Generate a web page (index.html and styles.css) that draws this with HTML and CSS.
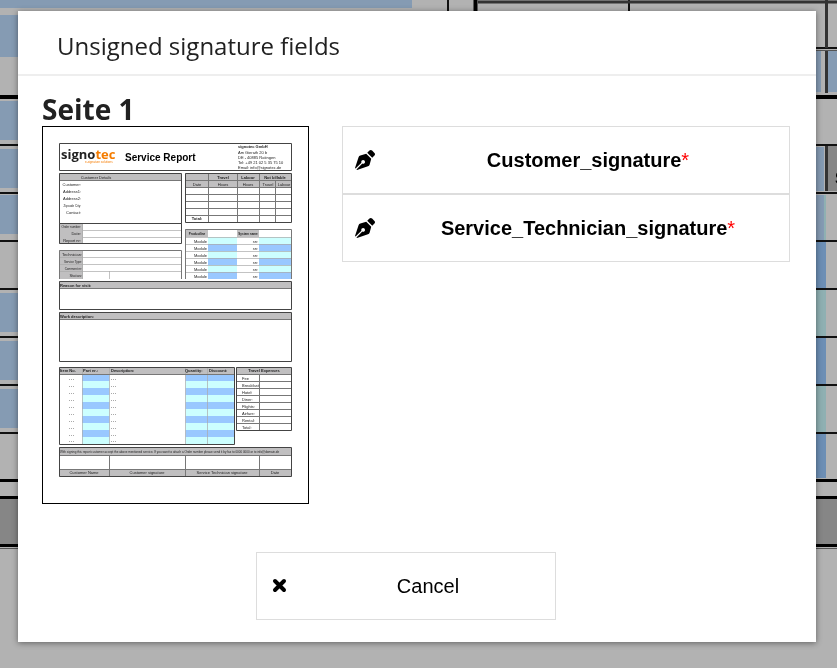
FILE: index.html
```html
<!DOCTYPE html>
<html lang="en">
<head>
    <meta charset="UTF-8">
    <meta name="viewport" content="width=device-width, initial-scale=1.0">
    <title>Unsigned signature fields</title>
    <link rel="stylesheet" href="styles.css">
</head>
<body>
    <!-- Document behind the dialog -->
    <svg class="document" viewBox="0 0 837 668" preserveAspectRatio="xMinYMin slice" aria-hidden="true">
        <path fill="#859bb3" d="M0 0H412V8H0zM0 15H200V57H0zM0 101H200V140H0zM0 149H200V188H0zM0 195H200V234H0zM0 293H200V332H0zM0 341H200V380H0zM0 389H200V428H0z"/>
        <path fill="#859bb3" d="M700 51H821V92H700zM828 51H837V92H828zM700 147H824V191H700zM700 195H824V240H700z"/>
        <path fill="#8fb0b2" d="M824 195H826V240H824zM700 290H826V336H700zM700 386H826V432H700z"/>
        <path fill="#6d8fb5" d="M700 242H826V288H700zM700 338H826V384H700zM700 434H826V478H700z"/>
        <path fill="#868686" d="M0 498H837V544H0zM828 146H837V191H828z"/>
        <path stroke="#000" stroke-width="4" d="M0 97H837M475.500 0V48"/>
        <path stroke="#111" stroke-width="2" d="M0 145H837M0 193H837M0 241H837M0 289H837M0 337H837M0 385H837M0 433H837M448 0V48M629 0V48M700 48H837"/>
        <path stroke="#000" stroke-width="3" d="M0 480.500H837M0 497.500H837M0 545.500H837"/>
        <path stroke="#333" stroke-width="3" d="M478 2H837M826.500 0V48M826.500 51V93M826.500 146V191"/>
        <path stroke="#555" d="M0 548.500H837M700 50.500H837"/>
        <text x="835" y="184" class="document-text">S</text>
    </svg>

    <div class="overlay">
        <div class="dialog" role="dialog" aria-modal="true" aria-labelledby="dialogTitle">
            <header>
                <h1 id="dialogTitle">Unsigned signature fields</h1>
            </header>
            <main>
                <h2>Seite 1</h2>
                <div class="page-row">
                    <svg class="thumbnail" viewBox="1 1 265 376" role="img" aria-label="Service Report">
                        <defs>
                            <pattern id="stripes" width="10" height="14" patternUnits="userSpaceOnUse" y="248">
                                <rect width="10" height="7" fill="#99c8ff"/>
                                <rect y="7" width="10" height="7" fill="#ccffff"/>
                            </pattern>
                        </defs>

                        <!-- Fills -->
                        <path fill="#c0bfc0" d="M17 47H139V54.500H17zM17 97H41V118H17zM17 124H41V153H17zM143 47H249V62H143zM143 103H166V111H143zM195 103H217V111H195zM17 155H249V163H17zM17 186H249V194H17zM17 241H192V248H17zM194 241H249V248H194zM17 321H249V329H17zM17 343H249V351H17z"/>
                        <path fill="#ccffff" d="M166 111H195V118H166zM217 111H249V118H217zM166 125H195V132H166zM217 125H249V132H217zM166 139H195V146H166zM217 139H249V146H217z"/>
                        <path fill="#99c8ff" d="M166 118H195V125H166zM217 118H249V125H217zM166 132H195V139H166zM217 132H249V139H217zM166 146H195V153H166zM217 146H249V153H217z"/>
                        <path fill="url(#stripes)" d="M40 248H67.500V318H40zM143.500 248H192.500V318H143.500z"/>

                        <!-- Inner lines -->
                        <g class="thin">
                            <path d="M41 104.500H139.500M41 111.500H139.500M17 131.500H139.500M17 138.500H139.500M17 145.500H139.500M67.500 145V153M40.500 97V118M40.500 124V153"/>
                            <path d="M143 118.500H249M143 125.500H249M143 132.500H249M143 139.500H249M143 146.500H249M143 111.500H249"/>
                            <path d="M40.500 241V318M67.500 241V318M143.500 241V318M165.500 241V318"/>
                        </g>
                        <g class="line">
                            <path d="M143 54.500H249M143 61.500H249M143 68.500H249M143 75.500H249M143 82.500H249M143 89.500H249M166.500 47V96M195.500 47V96M217.500 47V96M233.500 54V96"/>
                            <path d="M217.500 248V305M194 255.500H249M194 262.500H249M194 269.500H249M194 276.500H249M194 283.500H249M194 290.500H249M194 297.500H249"/>
                            <path d="M17 329.500H249M17 343.500H249M67.500 329V350M143.500 329V350M217.500 329V350M17 54.500H139M17 162.500H249M17 193.500H249M17 248.500H192M194 248.500H249"/>
                            <path d="M17.500 153V124.500H139.500V153M143.500 153V103.500H249.500V153"/>
                        </g>
                        <g class="frame">
                            <path d="M17.500 17.500H249.500V44.500H17.500zM17.500 47.500H139.500V97.500H17.500zM17.500 97.500H139.500V117.500H17.500zM143.500 47.500H249.500V96.500H143.500z"/>
                            <path d="M17.500 155.500H249.500V183.500H17.500zM17.500 186.500H249.500V235.500H17.500zM17.500 241.500H192.500V318.500H17.500zM194.500 241.500H249.500V304.500H194.500zM17.500 321.500H249.500V350.500H17.500z"/>
                        </g>

                        <!-- Heading -->
                        <text x="19" y="33" class="logo">signo<tspan fill="#f57c00">tec</tspan></text>
                        <text x="43" y="37" class="claim">e-signature solutions</text>
                        <text x="83" y="35" class="report-title">Service Report</text>
                        <text x="196" y="22" class="bold">signotec GmbH</text>
                        <text x="196" y="28">Am Gierath 20 b</text>
                        <text x="196" y="33">DE - 40885 Ratingen</text>
                        <text x="196" y="38">Tel: +49 21 02 5 35 75 10</text>
                        <text x="196" y="43">Email: info@signotec.de</text>

                        <g class="center">
                            <text x="54" y="53">Customer Details</text>
                            <text x="181" y="53" class="bold">Travel</text>
                            <text x="206" y="53" class="bold">Labour</text>
                            <text x="233" y="53" class="bold">Not billable</text>
                            <text x="155" y="60">Date</text>
                            <text x="181" y="60">Hours</text>
                            <text x="206" y="60">Hours</text>
                            <text x="226" y="60">Travel</text>
                            <text x="242" y="60">Labour</text>
                            <text x="155" y="94" class="bold">Total:</text>
                            <text x="155" y="109" class="bold small">Productline</text>
                            <text x="206" y="109" class="bold small">System name</text>
                            <text x="222" y="246" class="bold">Travel Expenses</text>
                            <text x="42" y="348">Customer Name</text>
                            <text x="105" y="348">Customer signature</text>
                            <text x="180" y="348">Service Technician signature</text>
                            <text x="233" y="348">Date</text>
                        </g>

                        <g class="right">
                            <text x="39" y="60">Customer:</text>
                            <text x="39" y="67">Address1:</text>
                            <text x="39" y="74">Address2:</text>
                            <text x="39" y="81" class="small">Zipcode City:</text>
                            <text x="39" y="88">Contact:</text>
                            <text x="39" y="102" class="small">Order number:</text>
                            <text x="39" y="109">Date:</text>
                            <text x="39" y="116">Report nr:</text>
                            <text x="40" y="130">Technician:</text>
                            <text x="40" y="137" class="small">Service Type:</text>
                            <text x="40" y="144" class="small">Comment nr:</text>
                            <text x="40" y="151">Status:</text>
                            <text x="165" y="117">Module</text><text x="216" y="117">sn:</text>
                            <text x="165" y="124">Module</text><text x="216" y="124">sn:</text>
                            <text x="165" y="131">Module</text><text x="216" y="131">sn:</text>
                            <text x="165" y="138">Module</text><text x="216" y="138">sn:</text>
                            <text x="165" y="145">Module</text><text x="216" y="145">sn:</text>
                            <text x="165" y="152">Module</text><text x="216" y="152">sn:</text>
                        </g>

                        <g class="bold">
                            <text x="18" y="161">Reason for visit:</text>
                            <text x="18" y="192">Work description:</text>
                            <text x="18" y="246">Item No.</text>
                            <text x="41" y="246">Part nr.:</text>
                            <text x="69" y="246">Description:</text>
                            <text x="143" y="246">Quantity:</text>
                            <text x="167" y="246">Discount:</text>
                        </g>

                        <text x="200" y="254">Fee</text>
                        <text x="200" y="261">Breakfast</text>
                        <text x="200" y="268">Hotel:</text>
                        <text x="200" y="275">Diner:</text>
                        <text x="200" y="282">Flights:</text>
                        <text x="200" y="289">Airfare:</text>
                        <text x="200" y="296">Rental:</text>
                        <text x="200" y="303">Total:</text>

                        <path class="dots" d="M27 253.500H33M27 260.500H33M27 267.500H33M27 274.500H33M27 281.500H33M27 288.500H33M27 295.500H33M27 302.500H33M27 309.500H33M27 315.500H33M69 253.500H74M69 260.500H74M69 267.500H74M69 274.500H74M69 281.500H74M69 288.500H74M69 295.500H74M69 302.500H74M69 309.500H74M69 315.500H74"/>
                        <text x="18" y="327" class="small">With signing this report customer accept the above mentioned service. If you want to attach a Order number please send it by fax to 0000 0000 or to info@domain.de</text>
                    </svg>

                    <div class="fields">
                        <button type="button" class="field">
                            <svg class="icon" viewBox="0 0 512 512" aria-hidden="true">
                                <path id="penNib" d="M136.600 138.790a64 64 0 0 0-43.310 41.350L0 460l14.690 14.690L164.800 324.580c-2.990-6.260-4.800-13.180-4.800-20.580 0-26.510 21.490-48 48-48s48 21.490 48 48-21.490 48-48 48c-7.400 0-14.320-1.810-20.580-4.800L37.310 497.310 52 512l279.860-93.290a64 64 0 0 0 41.350-43.310L416 224 288 96zM497.940 74.170l-60.110-60.110c-18.750-18.750-49.160-18.750-67.910 0l-56.550 56.550 128.020 128.020 56.550-56.550c18.750-18.750 18.750-49.150 0-67.910z"/>
                            </svg>
                            <span class="label">Customer_signature<span class="required">*</span></span>
                        </button>
                        <button type="button" class="field">
                            <svg class="icon" viewBox="0 0 512 512" aria-hidden="true">
                                <use href="#penNib"/>
                            </svg>
                            <span class="label">Service_Technician_signature<span class="required">*</span></span>
                        </button>
                    </div>
                </div>
            </main>
            <footer>
                <button type="button" class="cancel">
                    <svg class="icon" viewBox="0 0 20 20" aria-hidden="true">
                        <path class="cross" d="M6 5 15 14M15 5 6 14"/>
                    </svg>
                    <span class="label">Cancel</span>
                </button>
            </footer>
        </div>
    </div>
</body>
</html>
```
FILE: styles.css
```css
* {
    box-sizing: border-box;
}
body {
    margin: 0;
    background-color: #b2b2b2;
    color: #212121;
    font-family: "Open Sans", sans-serif;
}
.document {
    position: fixed;
    top: 0;
    left: 0;
    width: 100%;
    height: 100%;
}
.document-text {
    font: bold 16px "Liberation Sans", Arial, sans-serif;
}
.overlay {
    position: relative;
    padding: 11px 21px 26px 18px;
}
.dialog {
    background-color: #fff;
    box-shadow: 0 1px 6px rgba(0, 0, 0, 0.45);
}
header {
    padding: 18px 39px 11px;
    border-bottom: 2px solid #eee;
}
h1 {
    margin: 0;
    font-size: 24px;
    font-weight: 400;
    line-height: 34px;
}
main {
    padding: 16px 26px 0 24px;
}
h2 {
    margin: 0;
    font-size: 28px;
    font-weight: 700;
    line-height: 34px;
}
.page-row {
    display: grid;
    grid-template-columns: 267px 1fr;
    gap: 33px;
    align-items: start;
}

/* Page preview */
.thumbnail {
    display: block;
    width: 100%;
    border: 1px solid #000;
    background-color: #fff;
    fill: #222;
    font-family: "Liberation Sans", Arial, sans-serif;
    font-size: 4px;
}
.thumbnail .thin,
.thumbnail .line,
.thumbnail .frame {
    fill: none;
    stroke: #aaa;
}
.thumbnail .thin {
    stroke-opacity: 0.7;
}
.thumbnail .line {
    stroke: #777;
}
.thumbnail .frame {
    stroke: #444;
}
.thumbnail .logo {
    font-family: "Open Sans", sans-serif;
    font-size: 13px;
    font-weight: 700;
}
.thumbnail .claim {
    font-size: 3px;
    fill: #f57c00;
}
.thumbnail .report-title {
    font-size: 10px;
    font-weight: 700;
    fill: #000;
}
.thumbnail .bold {
    font-weight: 700;
}
.thumbnail .center {
    text-anchor: middle;
}
.thumbnail .right {
    text-anchor: end;
}
.thumbnail .small {
    font-size: 3px;
}
.thumbnail .dots {
    stroke: #aaa;
    stroke-dasharray: 1 1;
}

/* Buttons */
button {
    display: flex;
    align-items: center;
    width: 100%;
    height: 68px;
    padding: 0 0 0 12px;
    border: 1px solid #ddd;
    background-color: #fff;
    color: #000;
    font-family: "Liberation Sans", Arial, sans-serif;
    font-size: 20px;
    cursor: pointer;
}
button:hover {
    background-color: #f4f4f4;
}
.field {
    font-weight: 700;
}
.icon {
    flex: none;
    width: 20px;
    height: 20px;
    margin-right: 12px;
}
.cross {
    stroke: #000;
    stroke-width: 4;
    stroke-linecap: round;
}
.label {
    flex: 1;
    text-align: center;
}
.required {
    color: #f00;
    font-weight: 400;
}
footer {
    display: flex;
    justify-content: center;
    padding: 48px 46px 22px 24px;
}
.cancel {
    width: 300px;
}
```
